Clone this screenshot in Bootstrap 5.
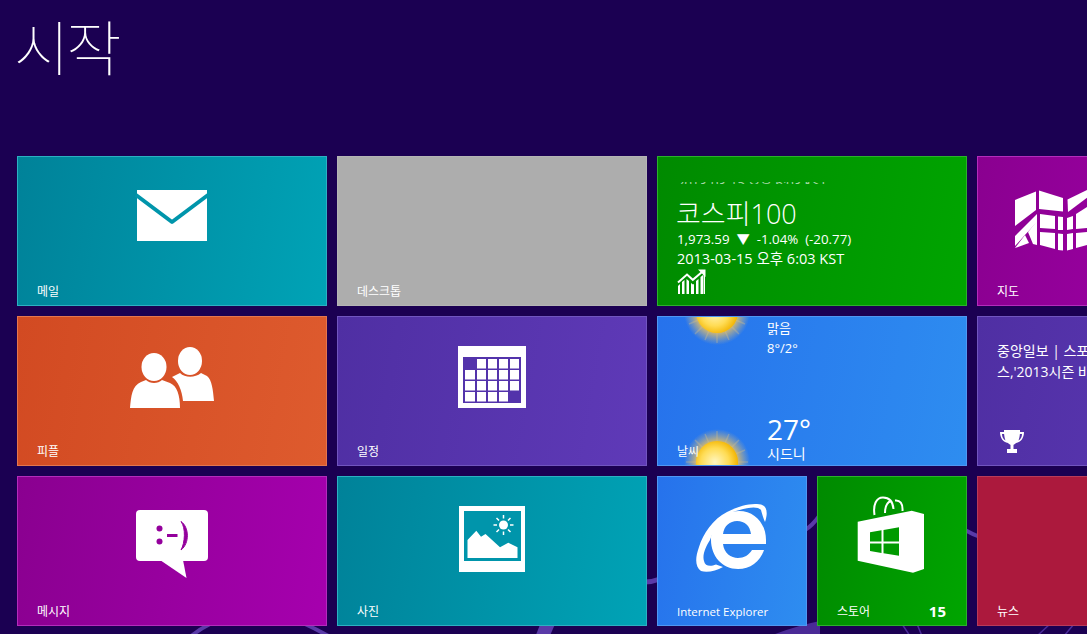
<!DOCTYPE html>
<html lang="ko">
<head>
<meta charset="utf-8">
<title>시작</title>
<meta name="viewport" content="width=device-width,initial-scale=1">
<link href="https://cdn.jsdelivr.net/npm/bootstrap@5.3.2/dist/css/bootstrap.min.css" rel="stylesheet">
<style>
  html, body   { height:100%; overflow:hidden; }
  body         { background:#1b0052; color:#fff; font-family:"Open Sans","Noto Sans CJK KR",sans-serif; }
  .start-wrap  { width:1087px; height:634px; overflow:hidden; }
  .swirl       { position:absolute; left:0; top:0; pointer-events:none; }
  .start-head  { height:156px; padding:4px 0 0 14px; font:100 60px/1.35 "Noto Sans CJK KR",sans-serif; letter-spacing:-3px; position:relative; }
  .tile-grid   { display:grid; grid-template-columns:repeat(8,150px); grid-auto-rows:150px; gap:10px; margin-left:17px; width:1270px; position:relative; }
  .tile        { border:1px solid; overflow:hidden; color:#fff; position:relative; }
  .span-2      { grid-column:span 2; }
  .tile-icon   { height:120px; margin-top:-1px; }
  .tile-icon svg { display:block; }
  .tile-name   { font-size:12px; line-height:14px; padding:0 20px 6px 19px; margin-top:auto; position:relative; }
  .tile-name.latin { font-size:11.5px; }
  .tile-count  { font-size:15px; line-height:14px; margin-top:-3px; }
  .t-teal      { background:linear-gradient(100deg,#008299,#00a3b6); border-color:#2cb0c2; }
  .t-gray      { background:#adadad; border-color:#b5b5b5; }
  .t-green     { background:linear-gradient(100deg,#008a00,#00a500); border-color:#2cb02c; }
  .t-magenta   { background:linear-gradient(100deg,#8a0090,#a600ae); border-color:#b42cbb; }
  .t-orange    { background:linear-gradient(100deg,#d24a22,#de5b2e); border-color:#e3764f; }
  .t-indigo    { background:linear-gradient(100deg,#4f2fa3,#5f3ab8); border-color:#7155bf; }
  .t-blue      { background:linear-gradient(100deg,#2672ec,#2e8df0); border-color:#4f97f2; }
  .t-red       { background:#ac193d; border-color:#b93a59; }
  .stock-body  { padding:25px 0 0 19px; }
  .stock-clip  { height:2px; overflow:hidden; font-size:13px; line-height:2px; white-space:nowrap; opacity:.65; }
  .stock-name  { font-size:27px; line-height:30px; margin:15px 0 0 -1px; font-weight:300; }
  .stock-line  { font-size:13.3px; line-height:20px; white-space:nowrap; }
  .stock-date  { font-size:14.5px; }
  .sun         { position:absolute; left:14px; width:90px; height:90px; }
  .sun-top     { top:-50px; }
  .sun-low     { top:100px; }
  .wx-col      { margin-left:109px; height:100%; position:relative; padding:1px 0 2px; }
  .wx-sm       { font-size:13px; line-height:20px; }
  .wx-temp     { font-size:28px; line-height:28px; margin-bottom:2px; }
  .wx-city     { font-size:14px; line-height:18px; }
  .wx-name     { position:absolute; left:0; bottom:0; }
  .news-text   { padding:23px 0 0 19px; font-size:14px; line-height:21px; white-space:nowrap; }
  .news-icon   { margin:47px 0 0 21px; display:block; }
</style>
</head>
<body>
<div class="start-wrap position-relative">

  <!-- background swirls, only seen in the gaps -->
  <svg class="swirl" width="1087" height="634" viewBox="0 0 1087 634" fill="none" stroke="#5a3aa8">
    <path d="M189 638Q198 630 210 624" stroke-width="4"/>
    <path d="M305 624Q318 630 332 638" stroke-width="4"/>
    <path d="M534 640L541 622H556L548 640Z" fill="#5a3aa8" stroke="none"/>
    <path d="M645 582Q652 582 660 579" stroke-width="5"/>
    <path d="M805 530Q812 526 820 515" stroke-width="4"/>
    <path d="M965 530Q972 534 980 537" stroke-width="4"/>
    <path d="M770 636Q795 626 820 621V640H770Z" fill="#4a2a96" stroke="none"/>
    <path d="M902 624L910 636M917 624L922 636" stroke-width="1.5" stroke="#4b2c9a"/>
    <path d="M1037 636L1050 624M1064 636L1074 624" stroke-width="1.5" stroke="#4b2c9a"/>
  </svg>

  <div class="start-head">시작</div>

  <div class="tile-grid">

    <!-- row 1 -->
    <div class="tile span-2 t-teal d-flex flex-column">
      <div class="tile-icon d-flex justify-content-center">
        <svg width="120" height="120" viewBox="112 156 120 120">
          <rect x="137" y="190" width="70" height="51" fill="#fff"/>
          <path d="M136 195L172 222L208 195" fill="none" stroke="#0095ab" stroke-width="4" stroke-linejoin="round"/>
        </svg>
      </div>
      <div class="tile-name">메일</div>
    </div>

    <div class="tile span-2 t-gray d-flex flex-column">
      <div class="tile-name">데스크톱</div>
    </div>

    <div class="tile span-2 t-green d-flex flex-column">
      <div class="stock-body">
        <div class="stock-clip d-flex align-items-end">2013-03-15 오후 6:03 KST</div>
        <div class="stock-name">코스피100</div>
        <div class="stock-line">1,973.59 &nbsp;▼ &nbsp;-1.04% &nbsp;(-20.77)</div>
        <div class="stock-line stock-date">2013-03-15 오후 6:03 KST</div>
        <svg class="d-block" width="30" height="26" viewBox="677 269 30 26" fill="#fff">
          <path d="M678 294V286L680 284V294ZM682 294V282L684.500 280V294ZM686.500 294V279L689 281V294ZM691 294V283L693 284.500L694 284V294ZM696 294V281L698.500 279V294ZM700.500 294V277L703 275V294ZM703.500 294V274L705 273V294Z"/>
          <path d="M678 282.500L687 274.500L692.800 279.800L702 272" fill="none" stroke="#fff" stroke-width="2"/>
          <path d="M698 269.500H705.500V277Z"/>
        </svg>
      </div>
    </div>

    <div class="tile span-2 t-magenta d-flex flex-column">
      <div class="tile-icon d-flex justify-content-center">
        <svg width="240" height="120" viewBox="1012 156 240 120" fill="#fff">
          <path d="M1015 200L1036 191.500V210L1015 226Z"/>
          <path d="M1039 190.500L1063 198V211.500L1039 209Z"/>
          <path d="M1067.500 199.500L1087 190L1092 188V194L1068 212Z"/>
          <path d="M1015 236L1037 214V222L1024 236L1015 246Z"/>
          <path d="M1015 248L1025 235L1029 243Z"/>
          <path d="M1028 232L1037 221V245L1033 244Z"/>
          <path d="M1040 214L1055 216V229L1040 228Z"/>
          <path d="M1058 216.500L1063 217V230L1058 230Z"/>
          <path d="M1040 232L1055 233V249L1040 245Z"/>
          <path d="M1058 233.500L1063 234V250.500L1058 250Z"/>
          <path d="M1067 218L1073 216V229L1067 230Z"/>
          <path d="M1067 234L1073 233V249L1067 250.500Z"/>
          <path d="M1076 214L1087 207V228L1076 229Z"/>
          <path d="M1076 233L1087 232V245L1076 248Z"/>
        </svg>
      </div>
      <div class="tile-name">지도</div>
    </div>

    <!-- row 2 -->
    <div class="tile span-2 t-orange d-flex flex-column">
      <div class="tile-icon d-flex justify-content-center">
        <svg width="120" height="120" viewBox="112 316 120 120" fill="#fff">
          <ellipse cx="154" cy="367" rx="12.500" ry="14"/>
          <ellipse cx="190" cy="361" rx="12" ry="14"/>
          <path d="M130 408C131 396 132 386 141 382L146 380C150 384 158 384 162 380L170 383C177 386 180 395 180 408Z"/>
          <path d="M172 377L180 373C185 378 195 378 201 373L207 376C212 380 213 390 214 401H183C182 390 178 381 172 377Z"/>
        </svg>
      </div>
      <div class="tile-name">피플</div>
    </div>

    <div class="tile span-2 t-indigo d-flex flex-column">
      <div class="tile-icon d-flex justify-content-center">
        <svg width="120" height="120" viewBox="432 316 120 120">
          <rect x="458" y="346" width="68" height="62" fill="#fff"/>
          <rect x="463" y="357" width="58" height="46" fill="#5333ab"/>
          <g fill="#fff">
            <rect x="477" y="359" width="9" height="9.500"/><rect x="488" y="359" width="9" height="9.500"/><rect x="499" y="359" width="9" height="9.500"/><rect x="510" y="359" width="9" height="9.500"/>
            <rect x="465" y="370" width="10" height="9.500"/><rect x="477" y="370" width="9" height="9.500"/><rect x="488" y="370" width="9" height="9.500"/><rect x="499" y="370" width="9" height="9.500"/><rect x="510" y="370" width="9" height="9.500"/>
            <rect x="465" y="381" width="10" height="9.500"/><rect x="477" y="381" width="9" height="9.500"/><rect x="488" y="381" width="9" height="9.500"/><rect x="499" y="381" width="9" height="9.500"/><rect x="510" y="381" width="9" height="9.500"/>
            <rect x="465" y="392" width="10" height="9.500"/><rect x="477" y="392" width="9" height="9.500"/><rect x="488" y="392" width="9" height="9.500"/><rect x="499" y="392" width="9" height="9.500"/>
          </g>
        </svg>
      </div>
      <div class="tile-name">일정</div>
    </div>

    <div class="tile span-2 t-blue">
      <svg class="sun sun-top" viewBox="0 0 90 90"><use href="#sunshape"/></svg>
      <svg class="sun sun-low" viewBox="0 0 90 90">
        <defs>
          <radialGradient id="sunfill" cx="0.45" cy="0.5" r="0.55">
            <stop offset="0" stop-color="#fff6c0"/>
            <stop offset="0.6" stop-color="#ffdc55"/>
            <stop offset="1" stop-color="#f2b400"/>
          </radialGradient>
          <radialGradient id="sunglow">
            <stop offset="0.6" stop-color="#e8c060" stop-opacity=".9"/>
            <stop offset="1" stop-color="#c8b890" stop-opacity="0"/>
          </radialGradient>
          <g id="sunshape">
            <circle cx="45" cy="45" r="33" fill="url(#sunglow)"/>
            <g stroke="#d8c088" stroke-opacity=".35" stroke-width="1.500">
              <path d="M45 14V76M14 45H76M23 23L67 67M67 23L23 67M33 17L57 73M57 17L33 73M17 33L73 57M17 57L73 33"/>
            </g>
            <circle cx="45" cy="45" r="21" fill="url(#sunfill)"/>
          </g>
        </defs>
        <use href="#sunshape"/>
      </svg>
      <div class="wx-col d-flex flex-column">
        <div class="wx-sm">맑음</div>
        <div class="wx-sm">8°/2°</div>
        <div class="wx-temp mt-auto">27°</div>
        <div class="wx-city">시드니</div>
      </div>
      <div class="tile-name wx-name">날씨</div>
    </div>

    <div class="tile span-2 t-indigo">
      <div class="news-text">중앙일보 | 스포츠<br>스,'2013시즌 바</div>
      <svg class="news-icon" width="26" height="26" viewBox="0 0 26 26" fill="#fff">
        <path d="M5 1H21V3H25C25 9 22 13 17 14C16 15 15 15.500 14.500 16V20H18V24H8V20H11.500V16C11 15.500 10 15 9 14C4 13 1 9 1 3H5ZM3 5C3 8 4.500 10.500 6.500 11.500C5.800 9.500 5.300 7.500 5.100 5ZM23 5H20.900C20.700 7.500 20.200 9.500 19.500 11.500C21.500 10.500 23 8 23 5Z" fill-rule="evenodd"/>
      </svg>
    </div>

    <!-- row 3 -->
    <div class="tile span-2 t-magenta d-flex flex-column">
      <div class="tile-icon d-flex justify-content-center">
        <svg width="120" height="120" viewBox="112 476 120 120">
          <rect x="136" y="510" width="72" height="51" rx="4" fill="#fff"/>
          <path d="M160 560L186.500 578L183 560Z" fill="#fff"/>
          <g fill="#94009c">
            <circle cx="159.500" cy="528.500" r="3"/>
            <circle cx="159.500" cy="541.500" r="3"/>
            <rect x="167" y="534" width="10.500" height="3"/>
            <path d="M181 521.500C189 527 190 543 181 550C185 543 186 528 181 521.500Z" stroke="#94009c" stroke-width="1"/>
          </g>
        </svg>
      </div>
      <div class="tile-name">메시지</div>
    </div>

    <div class="tile span-2 t-teal d-flex flex-column">
      <div class="tile-icon d-flex justify-content-center">
        <svg width="120" height="120" viewBox="432 476 120 120">
          <rect x="459" y="506" width="66" height="66" fill="#fff"/>
          <rect x="464" y="511" width="57" height="50" fill="#0095ab"/>
          <path d="M467.500 540L476.300 530.700L481 536.700L485.500 534L500 547.300L508.300 542.700L517.500 547.300V558H467.500Z" fill="#fff"/>
          <circle cx="503.500" cy="525" r="4.500" fill="#fff"/>
          <path d="M503.500 515V518.500M503.500 531.500V535M493.500 525H497M510 525H513.500M496.500 518L499 520.500M508 529.500L510.500 532M510.500 518L508 520.500M499 529.500L496.500 532" stroke="#fff" stroke-width="1.500"/>
        </svg>
      </div>
      <div class="tile-name">사진</div>
    </div>

    <div class="tile t-blue d-flex flex-column">
      <div class="tile-icon d-flex justify-content-center">
        <svg width="120" height="120" viewBox="672 476 120 120" fill="#fff">
          <path fill-rule="evenodd" d="M766 544H723C724 553 731 558 738 558C744 558 749 555 752 550H764C760 562 750 569 738 569C722 569 711 556 711 540C711 523 723 511 739 511C755 511 766 524 766 540ZM723 534H751C750 526 745 521 737 521C730 521 724 526 723 534Z"/>
          <path d="M765 522C769 510 766 503 755 504C745 504 735 508 727 512C713 519 703 534 699 547C695 558 695 567 701 571C707 573 716 571 723 567L716 564.500C710 567 705 566 704 561C702 555 706 546 710 540C714 528 720 519 733 512C745 508 757 505 761 510C762 514 763 517 765 522Z"/>
        </svg>
      </div>
      <div class="tile-name latin">Internet Explorer</div>
    </div>

    <div class="tile t-green d-flex flex-column">
      <div class="tile-icon d-flex justify-content-center">
        <svg width="120" height="120" viewBox="832 476 120 120">
          <path d="M857.700 521.700L911.700 510.700L924 514V569L913 572.700L857.700 560.700Z" fill="#fff"/>
          <path d="M870 532.300L881.500 530.300V541.500H870ZM883.500 530L899 527.300V541.500H883.500ZM870 543.500H881.500V553L870 551ZM883.500 543.500H899V555.700L883.500 553.300Z" fill="#009a00"/>
          <path d="M874.500 515C873 505 876 497.500 883 497.500C890 497.500 893 503 893.500 509M885 513C885 506 888 502 891 501M895 500.500C900 500 903 503 902.500 511" fill="none" stroke="#fff" stroke-width="2"/>
        </svg>
      </div>
      <div class="tile-name d-flex justify-content-between align-items-center"><span>스토어</span><span class="fw-bold tile-count">15</span></div>
    </div>

    <div class="tile span-2 t-red d-flex flex-column">
      <div class="tile-name">뉴스</div>
    </div>

  </div>
</div>
<script src="https://cdn.jsdelivr.net/npm/bootstrap@5.3.2/dist/js/bootstrap.bundle.min.js"></script>
</body>
</html>
